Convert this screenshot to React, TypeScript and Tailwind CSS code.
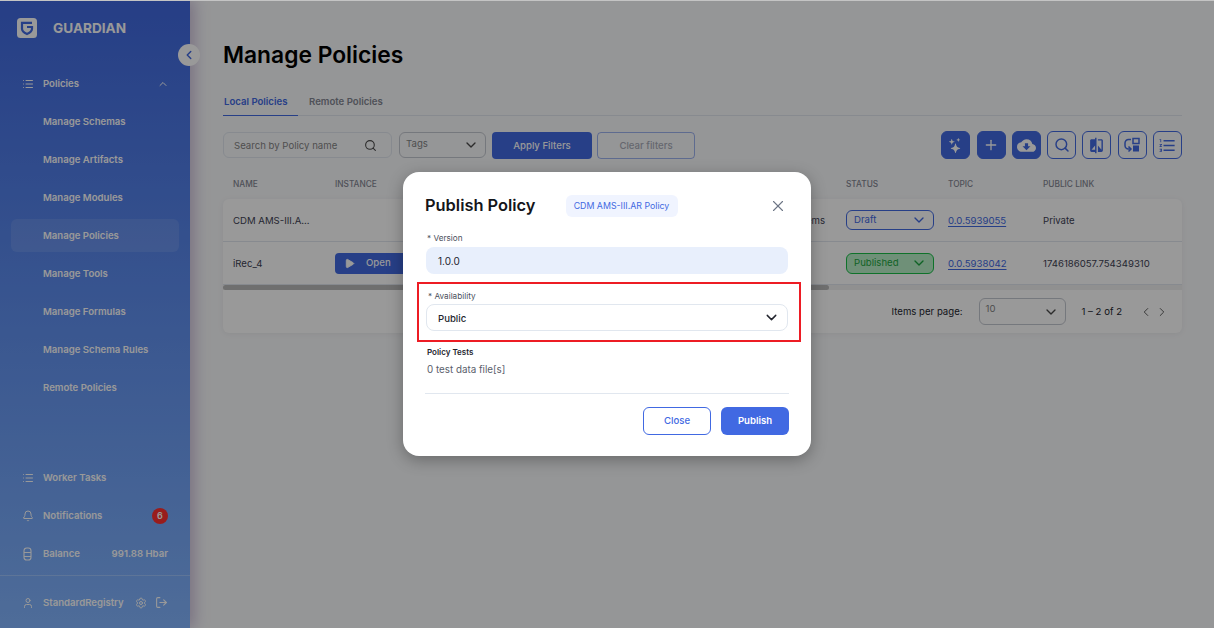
import React from "react";
import { ChevronLeft, ChevronUp, ChevronDown, ChevronRight, List, Bell, User, Settings, LogOut, Search, Plus, X, Play } from "lucide-react";
import { MdCloudDownload, MdCompare, MdFormatListNumbered } from "react-icons/md";
import { BsStars } from "react-icons/bs";

const font = { fontFamily: "Inter, 'Liberation Sans', sans-serif" };

function Logo() {
  return (
    <svg width="20" height="20" viewBox="0 0 20 20">
      <rect width="20" height="20" rx="3.5" fill="#fff" />
      <path d="M15 4.800H5v6c0 2.500 2 4 5 5.200 3-1.200 5-2.700 5-5.200V9h-5" fill="none" stroke="#4169E2" strokeWidth="2.200" />
    </svg>
  );
}

function Wallet() {
  return (
    <svg width="9" height="14" viewBox="0 0 9 14" fill="none" stroke="currentColor" strokeWidth="1.100">
      <rect x="1" y="1" width="7" height="12" rx="2.800" />
      <path d="M1 5.500h7M1 9.500h7" />
    </svg>
  );
}

function Swap() {
  return (
    <svg width="18" height="18" viewBox="0 0 18 18" fill="none">
      <path d="M8 3.500H5.500A3.500 3.500 0 0 0 2 7v2.500A3.500 3.500 0 0 0 5.500 13H7" stroke="#4169E2" strokeWidth="1.500" />
      <path d="M5.500 10.500 8 13l-2.500 2.500" stroke="#4169E2" strokeWidth="1.500" />
      <rect x="10" y="2.500" width="6" height="5" fill="none" stroke="#4169E2" strokeWidth="1.500" />
      <rect x="10" y="9.500" width="6" height="6" fill="#4169E2" />
    </svg>
  );
}

function NavItem({ label, active, left, right }: { label: string; active?: boolean; left?: React.ReactNode; right?: React.ReactNode }) {
  return (
    <div className={`flex h-[33px] items-center rounded-md pr-[11px] ${active ? "bg-white/10" : ""}`}>
      <div className="flex w-[32px] shrink-0 justify-center pl-[1px] text-white">{left}</div>
      <span className="pt-[2px] text-[9.600px] font-semibold text-white">{label}</span>
      <div className="ml-auto flex items-center text-white">{right}</div>
    </div>
  );
}

function Sidebar() {
  const items = ["Manage Schemas", "Manage Artifacts", "Manage Modules", "Manage Policies", "Manage Tools", "Manage Formulas", "Manage Schema Rules", "Remote Policies"];
  return (
    <aside className="relative z-10 flex w-[190px] shrink-0 flex-col bg-gradient-to-b from-[#4068DF] to-[#83B5FF] shadow-[4px_0_14px_rgba(110,70,150,0.35)]">
      <div className="flex h-[56px] items-start gap-[16px] pl-[17px] pt-[18px]">
        <Logo />
        <span className="text-[13.600px] leading-[20px] font-bold text-white">GUARDIAN</span>
      </div>
      <div className="absolute left-[178px] top-[44px] flex h-[22px] w-[22px] items-center justify-center rounded-full bg-white">
        <ChevronLeft size={14} strokeWidth={2.500} className="text-[#4169E2]" />
      </div>
      <nav className="mt-[11px] flex flex-col gap-[5px] px-[11px]">
        <NavItem label="Policies" left={<List size={12} />} right={<ChevronUp size={12} className="-mr-[1px]" />} />
        {items.map((i) => (
          <NavItem key={i} label={i} active={i === "Manage Policies"} />
        ))}
      </nav>
      <div className="flex-1" />
      <div className="flex flex-col gap-[5px] px-[11px]">
        <NavItem label="Worker Tasks" left={<List size={12} />} />
        <NavItem
          label="Notifications"
          left={<Bell size={12} />}
          right={<span className="flex h-[16px] w-[16px] items-center justify-center rounded-full bg-[#FF2F2F] text-[9px] font-semibold text-white">6</span>}
        />
        <NavItem label="Balance" left={<Wallet />} right={<span className="pt-[2px] text-[9.600px] font-semibold text-white">991.88 Hbar</span>} />
      </div>
      <div className="mt-[5px] border-t border-white/25 px-[11px] pt-[10px] pb-[9px]">
        <NavItem
          label="StandardRegistry"
          left={<User size={12} />}
          right={
            <div className="flex items-center gap-[8px]">
              <Settings size={12} />
              <LogOut size={13} />
            </div>
          }
        />
      </div>
    </aside>
  );
}

function IconBtn({ children, solid }: { children: React.ReactNode; solid?: boolean }) {
  return (
    <div className={`flex h-[28px] w-[29px] items-center justify-center rounded-md border ${solid ? "border-[#4169E2] bg-[#4169E2] text-white" : "border-[#4169E2] text-[#4169E2]"}`}>
      {children}
    </div>
  );
}

function Select({ label, className, icon = "text-[#4a4a4a]", text = "text-[#848484]" }: { label: string; className: string; icon?: string; text?: string }) {
  return (
    <div className={`flex items-center justify-between rounded-md border pl-[6px] pr-[6px] ${className}`}>
      <span className={`text-[9.600px] ${text}`}>{label}</span>
      <ChevronDown size={16} className={icon} />
    </div>
  );
}

function Row({ name, open, middle, status, topic, link }: { name: string; open?: boolean; middle?: string; status: React.ReactNode; topic: string; link: string }) {
  return (
    <div className="grid h-[43px] grid-cols-[102px_511px_102px_95px_1fr] items-center border-b border-[#E1E7EF] pl-[10px] text-[9.600px] text-[#3E4254]">
      <span className="pt-[2px]">{name}</span>
      <div className="flex items-center justify-between pr-[21px]">
        {open ? (
          <div className="flex h-[21px] w-[100px] items-center gap-[11px] rounded-[4px] bg-[#4169E2] pl-[9px] text-white">
            <Play size={11} fill="currentColor" />
            <span className="text-[9.600px] font-medium">Open</span>
          </div>
        ) : (
          <span />
        )}
        <span className="pt-[2px]">{middle}</span>
      </div>
      <div>{status}</div>
      <span className="pt-[2px] text-[#4169E2] underline underline-offset-2">{topic}</span>
      <span className="pt-[2px]">{link}</span>
    </div>
  );
}

function Main() {
  return (
    <main className="min-w-0 flex-1 pl-[33px] pr-[32px]">
      <h1 className="mt-[40px] h-[30px] text-[22.800px] leading-[30px] font-semibold text-black">Manage Policies</h1>
      <div className="mt-[17px] flex h-[29px] border-b border-[#E1E7EF] text-[9.600px] font-semibold">
        <div className="-mb-[1px] flex w-[75px] items-start border-b border-[#4169E2] pl-[1px] pt-[8px] text-[#4169E2]">Local Policies</div>
        <div className="ml-[11px] pt-[8px] text-[#848793]">Remote Policies</div>
      </div>
      <div className="mt-[15px] flex h-[28px] items-center">
        <div className="flex h-[26px] w-[169px] items-center justify-between rounded-md border border-[#E1E7EF] pl-[10px] pr-[14px]">
          <span className="pt-[3px] text-[9.600px] text-[#848484]">Search by Policy name</span>
          <Search size={13} className="text-[#4a4a4a]" />
        </div>
        <Select label="Tags" className="ml-[7px] h-[26px] w-[87px] border-[#C4C8D0]" text="-mt-[2px] text-[#848484]" />
        <div className="ml-[6px] flex h-[27px] w-[100px] items-center justify-center rounded-[4px] bg-[#4169E2] pt-[2px] text-[9.600px] font-medium text-white">Apply Filters</div>
        <div className="ml-[5px] flex h-[27px] w-[98px] items-center justify-center rounded-[4px] border border-[#4169E2]/50 pt-[2px] text-[9.600px] font-medium text-[#A8ACB8]">Clear filters</div>
        <div className="ml-auto flex gap-[6.300px]">
          <IconBtn solid><BsStars size={15} /></IconBtn>
          <IconBtn solid><Plus size={16} /></IconBtn>
          <IconBtn solid><MdCloudDownload size={19} /></IconBtn>
          <IconBtn><Search size={16} strokeWidth={2.200} /></IconBtn>
          <IconBtn><MdCompare size={17} /></IconBtn>
          <IconBtn><Swap /></IconBtn>
          <IconBtn><MdFormatListNumbered size={19} /></IconBtn>
        </div>
      </div>
      <div className="mt-[17px] grid h-[23px] grid-cols-[102px_511px_102px_95px_1fr] pl-[10px] pt-[2px] text-[8.300px] font-medium text-[#848793]">
        <span>NAME</span>
        <span>INSTANCE</span>
        <span>STATUS</span>
        <span>TOPIC</span>
        <span>PUBLIC LINK</span>
      </div>
      <div className="rounded-md bg-white shadow-[0_1px_6px_rgba(0,0,0,0.06)]">
        <Row
          name="CDM AMS-III.A..."
          middle="Items"
          status={<Select label="Draft" className="h-[20px] w-[88px] border-[#4169E2] pl-[7px]" icon="text-[#4169E2]" text="text-[#4169E2]" />}
          topic="0.0.5939055"
          link="Private"
        />
        <Row
          name="iRec_4"
          open
          status={<Select label="Published" className="h-[21px] w-[88px] border-[#19BE47] bg-[#B9F0C8] pl-[7px]" icon="text-[#19A53E]" text="text-[#19A53E]" />}
          topic="0.0.5938042"
          link="1746186057.754349310"
        />
        <div className="h-[5px] bg-[#F1F1F1]">
          <div className="h-[5px] w-[606px] rounded-full bg-[#B9B9B9]" />
        </div>
        <div className="flex h-[43px] items-center justify-end pr-[13px] text-[9.600px] text-[#23252E]">
          <span className="pt-[2px]">Items per page:</span>
          <Select label="10" className="ml-[16px] h-[27px] w-[87px] border-[#C4C8D0]" text="-mt-[4px] text-[#848484]" />
          <span className="ml-[16px] pt-[2px]">1 – 2 of 2</span>
          <ChevronLeft size={14} strokeWidth={1.500} className="ml-[17px] text-[#4a4a4a]" />
          <ChevronRight size={14} strokeWidth={1.500} className="ml-[2px] text-[#4a4a4a]" />
        </div>
      </div>
    </main>
  );
}

function Dialog() {
  return (
    <div className="absolute inset-0 z-20 flex items-center justify-center bg-black/40">
      <div className="h-[284px] w-[408px] rounded-[16px] bg-white pl-[22px] pr-[22px] pt-[22px] shadow-[0_4px_16px_rgba(0,0,0,0.3)]">
        <div className="flex h-[23px] items-center">
          <span className="text-[16.400px] font-semibold text-[#14151A]">Publish Policy</span>
          <span className="ml-[30px] flex h-[22px] w-[112px] items-center justify-center rounded-md bg-[#F0F4FF] text-[8.800px] text-[#4169E2]">CDM AMS-III.AR Policy</span>
          <X size={18} strokeWidth={1.500} className="ml-auto mr-[2px] text-[#6C7585]" />
        </div>
        <div className="mt-[15px] pl-[2px] text-[8.200px] leading-[12px] text-[#4B4F5C]">* Version</div>
        <div className="mx-[1px] mt-[3px] flex h-[27px] items-center rounded-lg bg-[#E8EFFC] pl-[12px] pt-[2px] text-[10px] text-[#23252E]">1.0.0</div>
        <div className="-mr-[12px] -ml-[8px] mt-[8px] h-[60px] border-2 border-[#ED1C24] pl-[7px] pr-[11px] pt-[6px]">
          <div className="pl-[2px] text-[8.200px] leading-[12px] text-[#4B4F5C]">* Availability</div>
          <div className="mt-[2px] flex h-[27px] items-center justify-between rounded-lg border border-[#E1E7EF] pl-[11px] pr-[7px] text-[9.600px] font-medium text-[#23252E]">
            <span className="pt-[3px]">Public</span>
            <ChevronDown size={17} className="text-[#23252E]" />
          </div>
        </div>
        <div className="mt-[4px] pl-[2px] text-[8px] leading-[12px] font-semibold text-[#23252E]">Policy Tests</div>
        <div className="mt-[4px] pl-[2px] text-[9.800px] leading-[16px] text-[#5A5E6B]">0 test data file[s]</div>
        <div className="mt-[15px] border-t border-[#E1E7EF]" />
        <div className="mt-[13px] flex justify-end gap-[10px]">
          <div className="flex h-[28px] w-[68px] items-center justify-center rounded-md border border-[#4169E2] text-[9.600px] font-medium text-[#4169E2]">Close</div>
          <div className="flex h-[28px] w-[68px] items-center justify-center rounded-md bg-[#4169E2] text-[9.600px] font-semibold text-white">Publish</div>
        </div>
      </div>
    </div>
  );
}

export default function App() {
  return (
    <div style={font} className="relative flex h-[628px] w-[1214px] overflow-hidden bg-[#F9FAFC]">
      <Sidebar />
      <Main />
      <Dialog />
      <div className="absolute inset-x-0 top-0 z-30 h-[1px] bg-[#C4C4C4]" />
    </div>
  );
}
